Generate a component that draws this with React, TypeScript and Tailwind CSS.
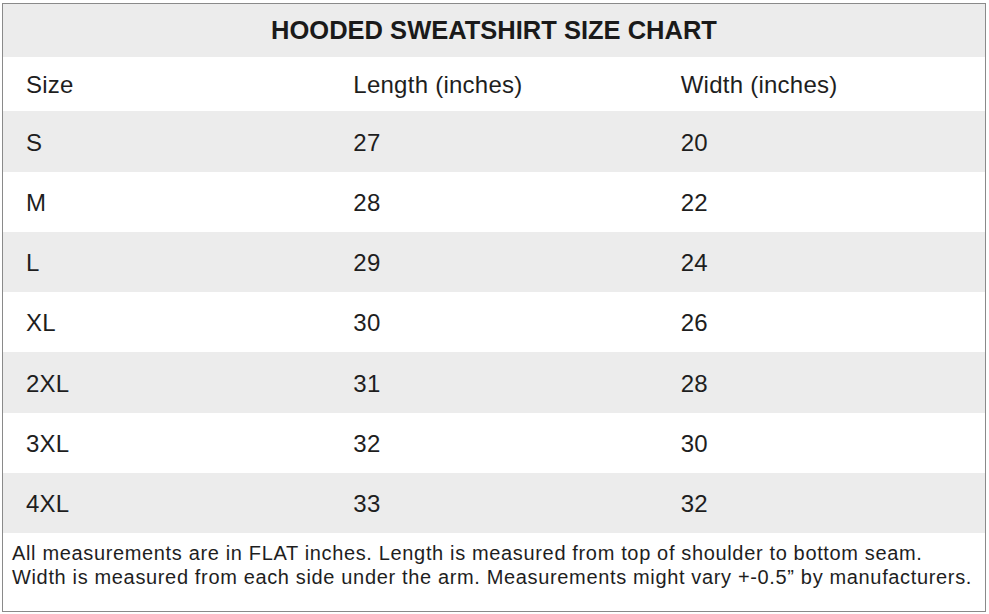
const rows = [
  { size: "S", length: "27", width: "20" },
  { size: "M", length: "28", width: "22" },
  { size: "L", length: "29", width: "24" },
  { size: "XL", length: "30", width: "26" },
  { size: "2XL", length: "31", width: "28" },
  { size: "3XL", length: "32", width: "30" },
  { size: "4XL", length: "33", width: "32" },
];

function Row({ cells, gray, tall }: { cells: string[]; gray: boolean; tall?: boolean }) {
  return (
    <div
      className={`grid grid-cols-3 items-center pt-[2px] ${gray ? "bg-[#ececec]" : "bg-white"} ${
        tall ? "h-[61px]" : "h-[60px]"
      }`}
    >
      {cells.map((c, i) => (
        <div key={i} className="pl-[23px] text-[24px] tracking-[0.25px] text-[#1e1e1e]">
          {c}
        </div>
      ))}
    </div>
  );
}

export default function App() {
  return (
    <div className="bg-white w-[989px] h-[614px] pl-[2px] pt-[3px] font-['Liberation_Sans',Arial,sans-serif]">
      <div className="w-[984px] h-[609px] border border-[#8a8a8a] flex flex-col">
        <div className="h-[53px] bg-[#ececec] flex items-center justify-center">
          <h1 className="text-[25.5px] font-bold text-[#1a1a1a]">HOODED SWEATSHIRT SIZE CHART</h1>
        </div>
        <div className="h-[54px] grid grid-cols-3 items-center pt-[2px] bg-white">
          <div className="pl-[23px] text-[24px] tracking-[0.25px] text-[#1e1e1e]">Size</div>
          <div className="pl-[23px] text-[24px] tracking-[0.25px] text-[#1e1e1e]">Length (inches)</div>
          <div className="pl-[23px] text-[24px] tracking-[0.25px] text-[#1e1e1e]">Width (inches)</div>
        </div>
        {rows.map((r, i) => (
          <Row
            key={r.size}
            cells={[r.size, r.length, r.width]}
            gray={i % 2 === 0}
            tall={i === 0 || i === 4}
          />
        ))}
        <div className="flex-1 bg-white pl-[9px] pt-[8px] text-[20px] leading-[24px] tracking-[0.65px] text-[#1e1e1e]">
          <p>All measurements are in FLAT inches. Length is measured from top of shoulder to bottom seam.</p>
          <p>Width is measured from each side under the arm. Measurements might vary +-0.5” by manufacturers.</p>
        </div>
      </div>
    </div>
  );
}
